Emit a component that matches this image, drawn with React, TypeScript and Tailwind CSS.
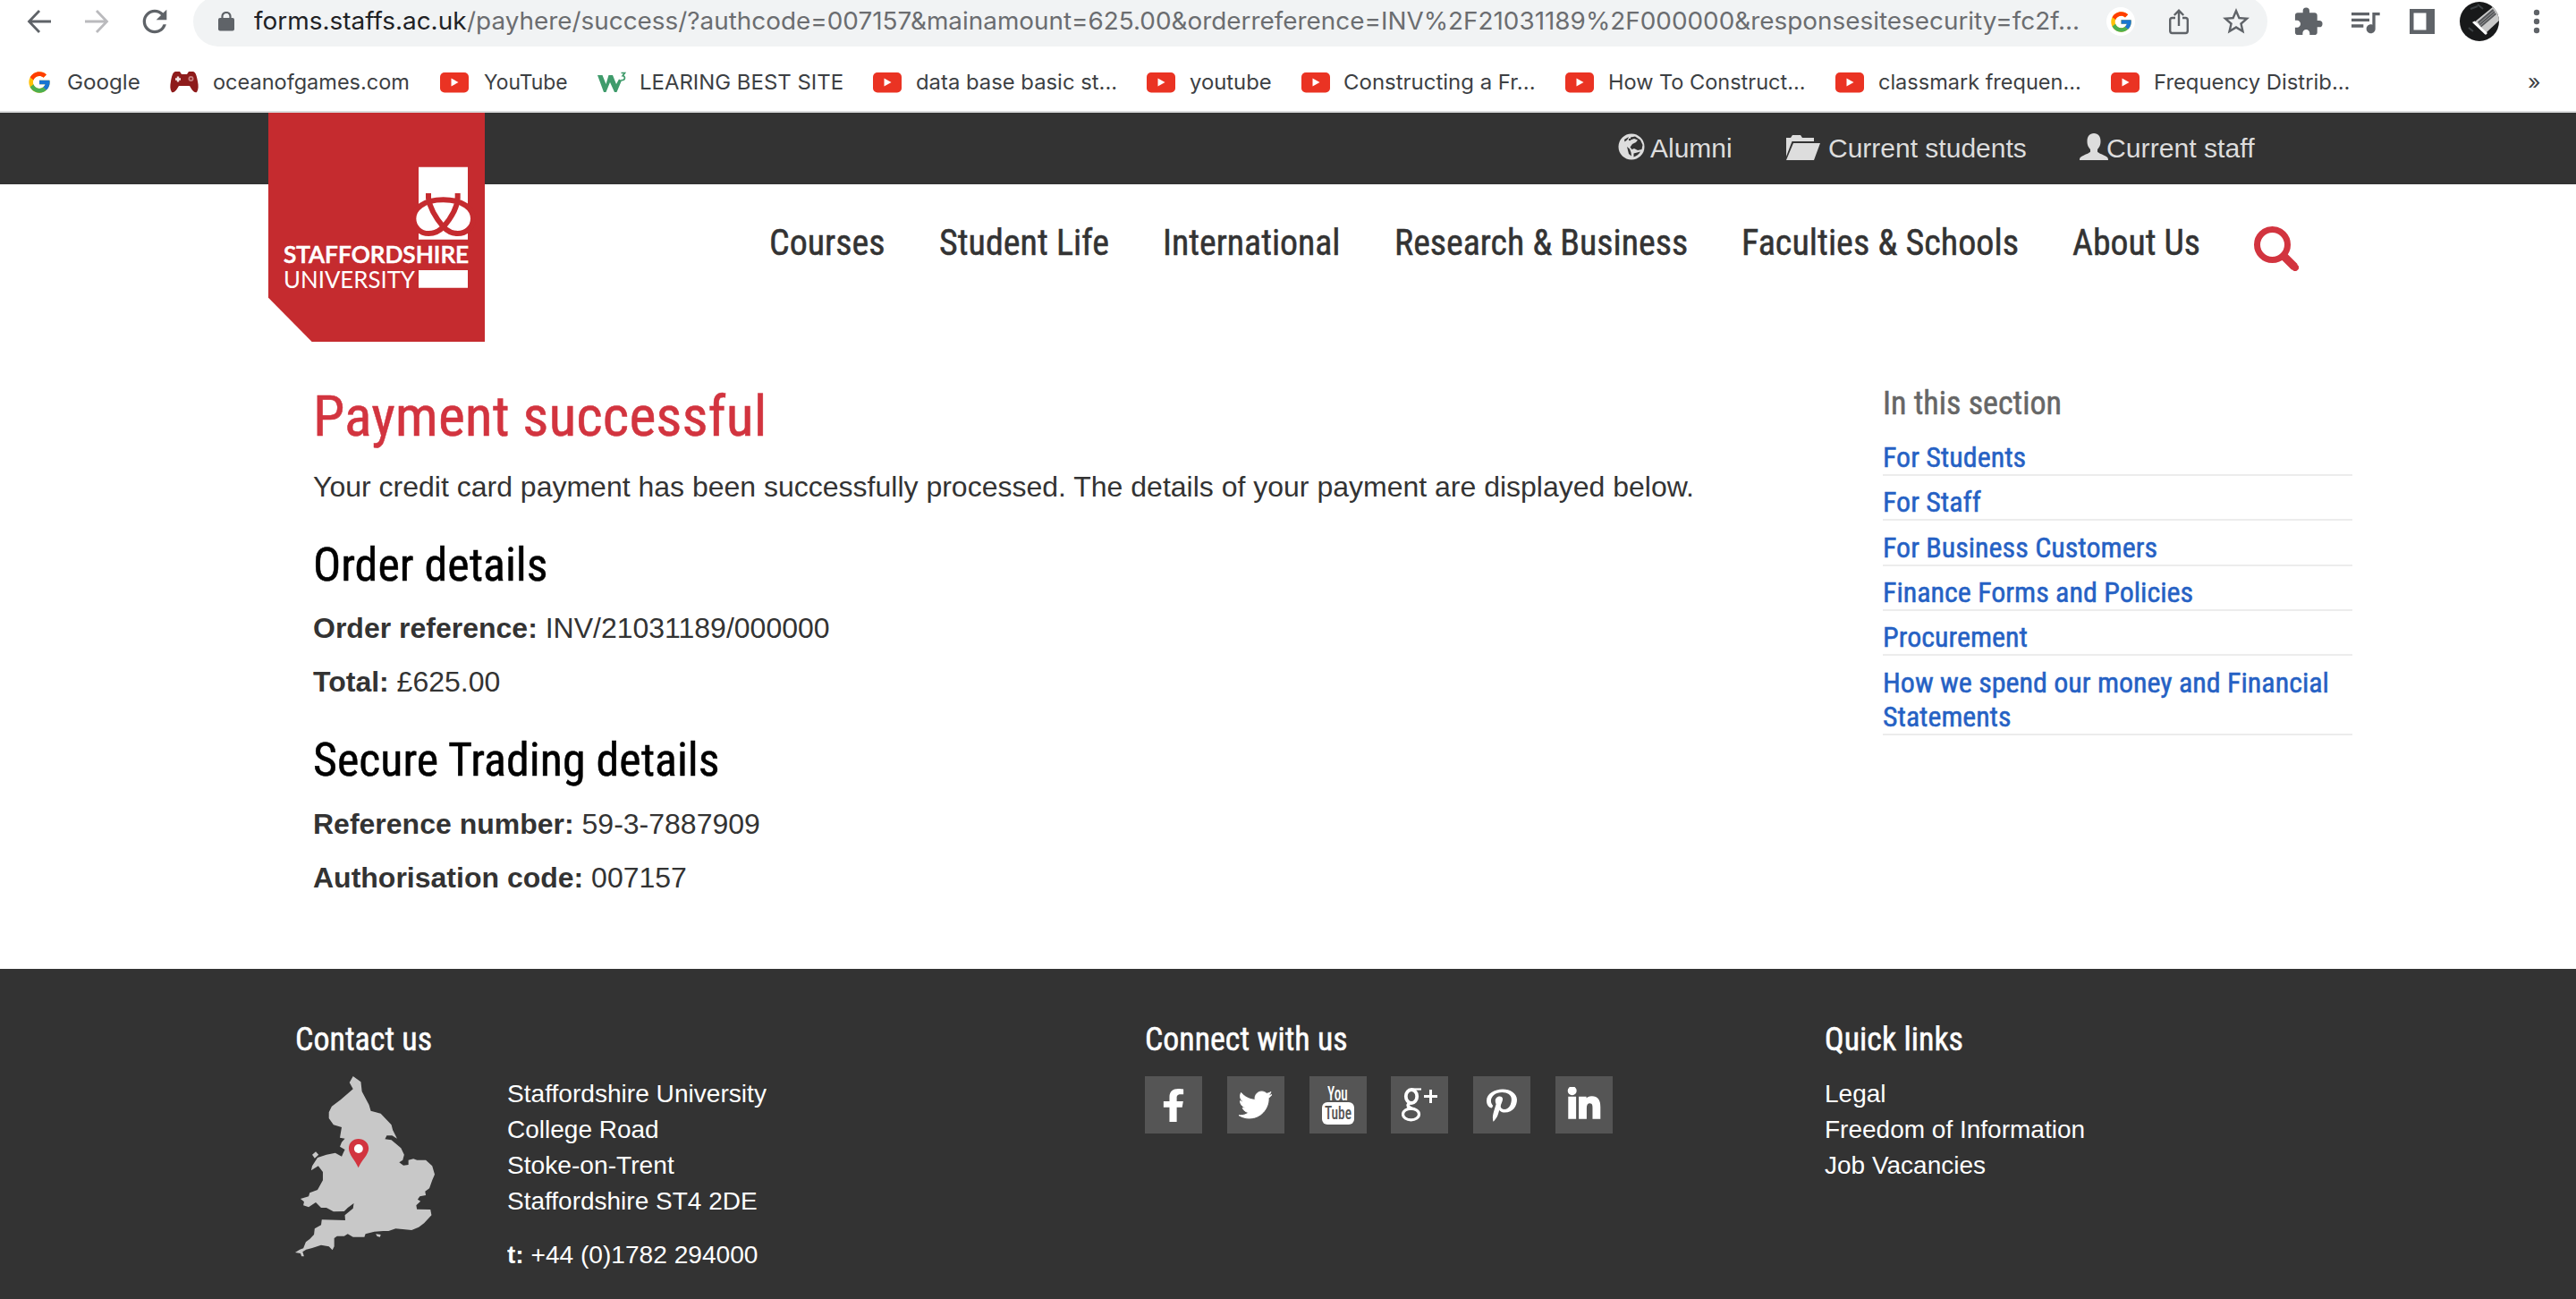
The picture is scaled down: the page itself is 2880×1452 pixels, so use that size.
import { useLayoutEffect, useRef, useState, type ReactNode } from "react";
import { FaFacebookF, FaTwitter, FaPinterestP, FaLinkedinIn } from "react-icons/fa";
import { MdExtension, MdQueueMusic, MdStarOutline, MdLock, MdRefresh } from "react-icons/md";
import { FcGoogle } from "react-icons/fc";

const ROBOTO = "font-[Roboto,sans-serif] font-stretch-75% [-webkit-text-stroke:0.5px_currentColor]";
const ARIAL = "font-['Liberation_Sans',Arial,sans-serif]";
const INTER = "font-[Inter,sans-serif]";

/** A single line of text condensed or widened to the given width. */
function Fit({ w, className = "", children }: { w: number; className?: string; children: ReactNode }) {
  const ref = useRef<HTMLSpanElement>(null);
  const [scale, setScale] = useState(1);
  useLayoutEffect(() => {
    if (ref.current) setScale(w / ref.current.offsetWidth);
  }, [w]);
  return (
    <span className={`block shrink-0 whitespace-nowrap ${className}`} style={{ width: w }}>
      <span ref={ref} className="inline-block origin-left" style={{ transform: scale === 1 ? undefined : `scaleX(${scale})` }}>
        {children}
      </span>
    </span>
  );
}

function Arrow({ className }: { className: string }) {
  return (
    <svg viewBox="0 0 28 28" className={`size-7 shrink-0 ${className}`} fill="none" stroke="currentColor" strokeWidth="2.8">
      <path d="M27 14H3M14 2 2.5 14 14 26" />
    </svg>
  );
}

function YtIcon() {
  return (
    <svg viewBox="0 0 32 24" className="h-6 w-8 shrink-0">
      <rect x="0" y="1" width="32" height="22.5" rx="5" fill="#ea3323" />
      <path d="M12.5 7.5v9l8-4.500z" fill="#fff" />
    </svg>
  );
}

function GamepadIcon() {
  return (
    <svg viewBox="0 0 32 26" className="h-[26px] w-8 shrink-0">
      <path d="M6 1h5l2 3h6l2-3h5c3 1 4 5 5 11 1 5 1 9-1 12-3 1-5-2-8-7H10c-3 5-5 8-8 7-2-3-2-7-1-12C2 6 3 2 6 1z" fill="#8e1b1b" />
      <path d="M6 9.5h6M9 6.5v6" stroke="#f3e3e3" strokeWidth="2.4" />
      <circle cx="23.5" cy="9" r="3" fill="#c98080" />
      <circle cx="23.5" cy="9" r="1.2" fill="#8e1b1b" />
    </svg>
  );
}

function W3Icon() {
  return (
    <svg viewBox="0 0 32 24" className="h-6 w-8 shrink-0">
      <path d="M0 4h5.500l4 10L12.500 4h4.500l4 10L24 8.500 27 10 21.500 23h-2.500L14 12 9.500 23H7z" fill="#3f9b6b" />
      <path d="M26.500 1.500h4l-2.400 3.200c3.600.4 3 6-1.800 4.800" fill="none" stroke="#3f9b6b" strokeWidth="1.700" />
    </svg>
  );
}

function Bookmark({ icon, label, w, ml, gap }: { icon: ReactNode; label: string; w: number; ml: string; gap: string }) {
  return (
    <div className={`flex items-center ${ml}`}>
      {icon}
      <Fit w={w} className={`mb-[1px] ${gap}`}>{label}</Fit>
    </div>
  );
}

function BrowserChrome() {
  return (
    <div className={`shrink-0 bg-white ${INTER}`}>
      <div className="-mt-1 flex h-14 items-center text-[#5f6368]">
        <Arrow className="ml-[30px]" />
        <Arrow className="ml-9 rotate-180 text-[#bababd]" />
        <MdRefresh className="ml-[31px] size-[40px] shrink-0" />
        <div className="ml-[23px] flex h-14 w-[2319px] shrink-0 items-center rounded-full bg-[#f1f3f4]">
          <svg viewBox="0 0 18 22" className="ml-[28px] h-[22px] w-[18px] shrink-0" fill="currentColor">
            <rect x="0" y="7" width="18" height="14.500" rx="2" />
            <path d="M4.500 8V5a4.500 4 0 0 1 9 0v3" fill="none" stroke="currentColor" strokeWidth="2.200" />
          </svg>
          <Fit w={238} className="ml-[22px] text-[27px] leading-[56px] text-[#202124]">forms.staffs.ac.uk</Fit>
          <Fit w={1803} className="text-[27px] leading-[56px] text-[#6b6d70]">
            /payhere/success/?authcode=007157&amp;mainamount=625.00&amp;orderreference=INV%2F21031189%2F000000&amp;responsesitesecurity=fc2f...
          </Fit>
          <span className="ml-[30px] flex size-8 shrink-0 items-center justify-center rounded-full bg-white">
            <FcGoogle className="size-[27px]" />
          </span>
          <svg viewBox="0 0 24 30" className="ml-[37px] h-[30px] w-6 shrink-0" fill="none" stroke="currentColor" strokeWidth="2.4">
            <path d="M8 11H4.500Q2.200 11 2.200 13.200V25.500Q2.200 28 4.500 28h15q2.300 0 2.300-2.500V13.200Q21.800 11 19.500 11H16M12 20V3M6.800 8 12 2.800 17.200 8" />
          </svg>
          <MdStarOutline className="ml-[34px] size-9 shrink-0" />
        </div>
        <MdExtension className="ml-[28px] size-[35px] shrink-0" />
        <MdQueueMusic className="ml-[26px] h-[42px] w-[40px] shrink-0" />
        <svg viewBox="0 0 28 28" className="ml-[30px] size-7 shrink-0">
          <path fillRule="evenodd" d="M0 0h28v28H0zM4.500 4.500v19h14v-19z" fill="currentColor" />
        </svg>
        <svg viewBox="0 0 44 44" className="ml-7 size-11 shrink-0">
          <defs>
            <clipPath id="avatar"><circle cx="22" cy="22" r="22" /></clipPath>
          </defs>
          <g clipPath="url(#avatar)">
            <rect width="44" height="44" fill="#18191a" />
            <path d="M16 23 38 5l8 14-18 17z" fill="#c9c9c9" />
            <path d="M20 22.500 37 8l4 6-17 14.500z" fill="#55575a" />
            <path d="M21.500 24.500 38.500 10M23 26.500 40 12" stroke="#aaa" strokeWidth=".8" />
            <path d="M14 23 29 37l2-2L16.500 21.500z" fill="#fff" />
            <path d="M10 29l5 4M20 3l6 5M12 8l8-3" stroke="#3c4144" strokeWidth="2" />
          </g>
        </svg>
        <svg viewBox="0 0 8 28" className="ml-[38px] h-7 w-2 shrink-0" fill="currentColor">
          <circle cx="4" cy="4" r="3.200" />
          <circle cx="4" cy="14" r="3.200" />
          <circle cx="4" cy="24" r="3.200" />
        </svg>
      </div>
      <div className="flex h-[72px] items-center border-0 pt-2 text-[23.300px] leading-8 text-[#3c4043]">
        <Bookmark icon={<FcGoogle className="size-[28px] shrink-0" />} label="Google" w={82} ml="ml-[30px]" gap="ml-[17px]" />
        <Bookmark icon={<GamepadIcon />} label="oceanofgames.com" w={220} ml="ml-[33px]" gap="ml-[16px]" />
        <Bookmark icon={<YtIcon />} label="YouTube" w={94} ml="ml-[34px]" gap="ml-[17px]" />
        <Bookmark icon={<W3Icon />} label="LEARING BEST SITE" w={228} ml="ml-[33px]" gap="ml-[15px]" />
        <Bookmark icon={<YtIcon />} label="data base basic st..." w={225} ml="ml-[33px]" gap="ml-[16px]" />
        <Bookmark icon={<YtIcon />} label="youtube" w={92} ml="ml-[33px]" gap="ml-[16px]" />
        <Bookmark icon={<YtIcon />} label="Constructing a Fr..." w={215} ml="ml-[33px]" gap="ml-[15px]" />
        <Bookmark icon={<YtIcon />} label="How To Construct..." w={221} ml="ml-[33px]" gap="ml-[16px]" />
        <Bookmark icon={<YtIcon />} label="classmark frequen..." w={227} ml="ml-[33px]" gap="ml-[16px]" />
        <Bookmark icon={<YtIcon />} label="Frequency Distrib..." w={219} ml="ml-[33px]" gap="ml-[16px]" />
        <Fit w={15} className="mb-[1px] ml-[199px]">»</Fit>
      </div>
      <div className="h-[2px] bg-[#dbdcdd]" />
    </div>
  );
}

function Logo() {
  return (
    <div className="absolute top-0 left-[300px] h-64 w-[242px]">
      <svg viewBox="60 48 726 768" className="absolute inset-0 h-64 w-[242px]">
        <path d="M60 48H786V816H206L60 668z" fill="#c52b2f" />
        <path d="M564 230h165v243H564zM564 576h165v59H564z" fill="#fff" />
        <path
          d="M597 318V335C602 370 625 405 647 431C667 452 685 453 695 453C724 453 747 432 747 403C747 370 715 340 647 340C579 340 547 370 547 403C547 432 570 453 598 453C609 453 627 452 647 431C670 405 692 370 695 335V318"
          fill="#fff" stroke="#c52b2f" strokeWidth="18"
        />
      </svg>
      <div className="relative ml-[17px] pt-[144px] font-[Lato,sans-serif] text-[26.500px] leading-7 text-white">
        <Fit w={207} className="font-semibold [-webkit-text-stroke:0.6px_currentColor]">STAFFORDSHIRE</Fit>
        <Fit w={147}>UNIVERSITY</Fit>
      </div>
    </div>
  );
}

const nav = [
  ["Courses", 130], ["Student Life", 190], ["International", 199],
  ["Research & Business", 328], ["Faculties & Schools", 310], ["About Us", 143],
] as const;

function SiteHeader() {
  return (
    <header className="relative shrink-0">
      <div className={`flex h-20 items-center bg-[#333] text-[30px] leading-[40px] text-[#ddd] ${ARIAL}`}>
        <svg viewBox="0 0 30 30" className="mb-[4px] ml-[1809px] size-[30px] shrink-0">
          <circle cx="15" cy="15" r="14.500" fill="#ddd" />
          <path d="M14 4.500 19 3.500 25 7.500 27.500 13 26.500 18 22 19 18 17 15.500 18 13.500 15.500 16 12 20 10 22 7.500 18 6 14 7.500z" fill="#333" />
          <path d="M7 7 12 4 10.500 7 7.500 9.500zM10 15l3 2.500 1.500 4 .5 4-3-2.500-1-4z" fill="#333" />
          <path d="M17.500 22.500 25 20.500C23.500 23.500 20.500 25.500 17.500 26.500z" fill="#333" />
          <circle cx="13" cy="7" r="1.200" fill="#333" />
        </svg>
        <Fit w={92} className="ml-[6px]">Alumni</Fit>
        <svg viewBox="0 0 38 28" className="mb-[2px] ml-[60px] h-7 w-[38px] shrink-0" fill="#ddd">
          <path d="M0 21V3h5l2-3h9l2 3h13v4H6.500L0 24zM8 9H38L31 28H0z" />
        </svg>
        <Fit w={222} className="ml-[9px]">Current students</Fit>
        <svg viewBox="0 0 32 30" className="mb-[5px] ml-[59px] h-[30px] w-8 shrink-0" fill="#ddd">
          <path d="M16 0c5 0 7.500 3.500 7.500 9 0 5-2 7-3.500 9v2.500c0 1 4 2.500 8 4.500 3 1.500 4 2 4 5H0c0-3 1-3.500 4-5 4-2 8-3.500 8-4.500V18c-1.500-2-3.500-4-3.500-9C8.500 3.500 11 0 16 0z" />
        </svg>
        <Fit w={166} className="-ml-[2px]">Current staff</Fit>
      </div>
      <nav className={`flex h-[176px] gap-[60px] pt-[42px] pl-[860px] text-[40px] leading-[48px] text-[#333] ${ROBOTO}`}>
        {nav.map(([label, w]) => (
          <Fit key={label} w={w}>{label}</Fit>
        ))}
        <svg viewBox="0 0 50 50" className="mt-[5px] size-[50px] shrink-0" fill="none" stroke="#d2343f">
          <circle cx="20.500" cy="20.500" r="17" strokeWidth="7" />
          <path d="M32 32 45.500 45.500" strokeWidth="9" />
          <path d="M44 44 46 46" strokeWidth="8" strokeLinecap="round" />
        </svg>
      </nav>
      <Logo />
    </header>
  );
}

const sections = [
  ["For Students", 160], ["For Staff", 110], ["For Business Customers", 307],
  ["Finance Forms and Policies", 347], ["Procurement", 162],
] as const;

function Main() {
  return (
    <main className="flex h-[701px] shrink-0 justify-between pt-[48px] pr-[250px] pl-[350px]">
      <article className={`text-[32px] leading-10 text-[#333] ${ARIAL}`}>
        <h1 className={`text-[63px] leading-[72px] text-[#d2343f] ${ROBOTO}`}><Fit w={507}>Payment successful</Fit></h1>
        <p className="mt-[22px]"><Fit w={1544}>Your credit card payment has been successfully processed. The details of your payment are displayed below.</Fit></p>
        <h2 className={`mt-[38px] text-[51.200px] leading-[60px] text-black ${ROBOTO}`}><Fit w={263}>Order details</Fit></h2>
        <p className="mt-5"><Fit w={578}><b>Order reference:</b> INV/21031189/000000</Fit></p>
        <p className="mt-5"><Fit w={209}><b>Total:</b> £625.00</Fit></p>
        <h2 className={`mt-[38px] text-[51.200px] leading-[60px] text-black ${ROBOTO}`}><Fit w={455}>Secure Trading details</Fit></h2>
        <p className="mt-[21px]"><Fit w={500}><b>Reference number:</b> 59-3-7887909</Fit></p>
        <p className="mt-5"><Fit w={418}><b>Authorisation code:</b> 007157</Fit></p>
      </article>
      <aside className={`w-[525px] text-[32px] leading-[38px] text-[#2561c4] ${ROBOTO}`}>
        <h3 className="pt-[1px] text-[36px] leading-10 text-[#666]"><Fit w={200}>In this section</Fit></h3>
        <ul className="mt-[10.600px]">
          {sections.map(([label, w]) => (
            <li key={label} className="border-b-2 border-[#ececec] pt-[10.200px] pb-[0.200px]"><Fit w={w}>{label}</Fit></li>
          ))}
          <li className="border-b-2 border-[#ececec] pt-[10.200px] pb-[0.200px]">
            <Fit w={499}>How we spend our money and Financial</Fit>
            <Fit w={144}>Statements</Fit>
          </li>
        </ul>
      </aside>
    </main>
  );
}

function EnglandMap() {
  return (
    <svg viewBox="77 249 393 606" preserveAspectRatio="none" className="h-[202px] w-[156px] shrink-0">
      <path
        fill="#c8c8c8"
        d="M240 249 262 268 265 300 285 345 290 365 318 374 348 412 352 430 364 458 350 448 335 448 330 460 348 463 375 490 384 512 380 530 370 538 382 548 396 546 396 530 410 526 420 530 445 530 463 550 470 578 463 598 455 625 443 635 445 648 428 652 422 662 430 668 418 682 420 695 458 696 461 715 440 742 425 755 405 765 380 762 360 760 340 768 325 768 300 770 275 778 272 788 240 788 225 778 215 785 195 785 187 792 187 820 182 832 172 820 150 815 125 825 108 830 98 838 102 853 95 853 92 843 77 840 90 830 100 826 107 805 118 795 130 780 132 760 150 748 152 730 218 732 217 715 240 692 242 675 225 690 215 702 185 703 165 690 150 690 135 672 115 688 100 682 102 670 92 660 115 652 118 640 140 630 155 598 155 570 142 550 122 565 125 550 140 522 165 512 190 506 208 518 213 505 217 495 203 485 208 470 217 458 203 455 208 420 185 412 172 390 172 370 180 350 205 328 240 292 230 270zM125 512 135 502 143 512 132 524zM304 778 318 780 316 788 308 786z"
      />
      <path d="M255 556C246 530 228 512 228 491C228 472 240 459 255 459C271 459 284 472 284 491C284 512 264 530 255 556z" fill="#d2343f" />
      <ellipse cx="255.500" cy="492" rx="12.500" ry="15" fill="#fff" />
    </svg>
  );
}

function YouTubeBadge() {
  return (
    <div className="flex flex-col items-center font-[Roboto,sans-serif] text-[22px] leading-[19px] font-medium font-stretch-75%">
      <Fit w={23}>You</Fit>
      <span className="flex h-[25px] w-9 items-center justify-center rounded-[6px] bg-white text-[20px] leading-[25px] text-[#555]">
        <Fit w={30}>Tube</Fit>
      </span>
    </div>
  );
}

function GooglePlusGlyph() {
  return (
    <svg viewBox="0 0 40 38" className="h-[38px] w-10" fill="none" stroke="#fff">
      <ellipse cx="11" cy="9.500" rx="6.200" ry="7.500" strokeWidth="3.800" />
      <path d="M11 1.500h11" strokeWidth="2.200" />
      <path d="M9 17c-4 3-1 4.500 3 6.500" strokeWidth="3.500" />
      <ellipse cx="10.500" cy="29.500" rx="9" ry="6.300" strokeWidth="3.200" />
      <path d="M25 9.500h15M32.500 2v15" strokeWidth="3" />
    </svg>
  );
}

/** The solid, open-winged bird with its tail at the lower left. */
function BirdGlyph() {
  return <FaTwitter className="h-[38px] w-[37px]" stroke="currentColor" strokeWidth="12" />;
}

const tile = "flex size-16 shrink-0 items-center justify-center bg-[#555] text-white";

function Footer() {
  return (
    <footer className={`flex h-[369px] shrink-0 bg-[#333] pt-[59px] pl-[330px] text-[28px] leading-10 text-white ${ARIAL}`}>
      <section className="w-[950px] shrink-0">
        <h3 className={`text-[36px] ${ROBOTO}`}><Fit w={153}>Contact us</Fit></h3>
        <div className="mt-[21px] flex">
          <EnglandMap />
          <address className="ml-[81px] not-italic">
            <Fit w={290}>Staffordshire University</Fit>
            <Fit w={170}>College Road</Fit>
            <Fit w={187}>Stoke-on-Trent</Fit>
            <Fit w={280}>Staffordshire ST4 2DE</Fit>
            <Fit w={280} className="mt-5"><b>t:</b> +44 (0)1782 294000</Fit>
          </address>
        </div>
      </section>
      <section className="w-[760px] shrink-0">
        <h3 className={`text-[36px] ${ROBOTO}`}><Fit w={227}>Connect with us</Fit></h3>
        <div className="mt-[21px] flex gap-[27.800px]">
          <span className={tile}><FaFacebookF className="h-[37px] w-[26px]" preserveAspectRatio="none" /></span>
          <span className={tile}><BirdGlyph /></span>
          <span className={tile}><YouTubeBadge /></span>
          <span className={tile}><GooglePlusGlyph /></span>
          <span className={tile}><FaPinterestP className="h-[37px] w-[34px]" preserveAspectRatio="none" /></span>
          <span className={tile}><FaLinkedinIn className="size-[40px]" stroke="currentColor" strokeWidth="20" /></span>
        </div>
      </section>
      <section>
        <h3 className={`text-[36px] ${ROBOTO}`}><Fit w={155}>Quick links</Fit></h3>
        <div className="mt-[21px]">
          <Fit w={69}>Legal</Fit>
          <Fit w={291}>Freedom of Information</Fit>
          <Fit w={180}>Job Vacancies</Fit>
        </div>
      </section>
    </footer>
  );
}

export default function App() {
  return (
    <div className="flex h-[1452px] w-[2880px] flex-col overflow-hidden bg-white">
      <BrowserChrome />
      <SiteHeader />
      <Main />
      <Footer />
    </div>
  );
}
